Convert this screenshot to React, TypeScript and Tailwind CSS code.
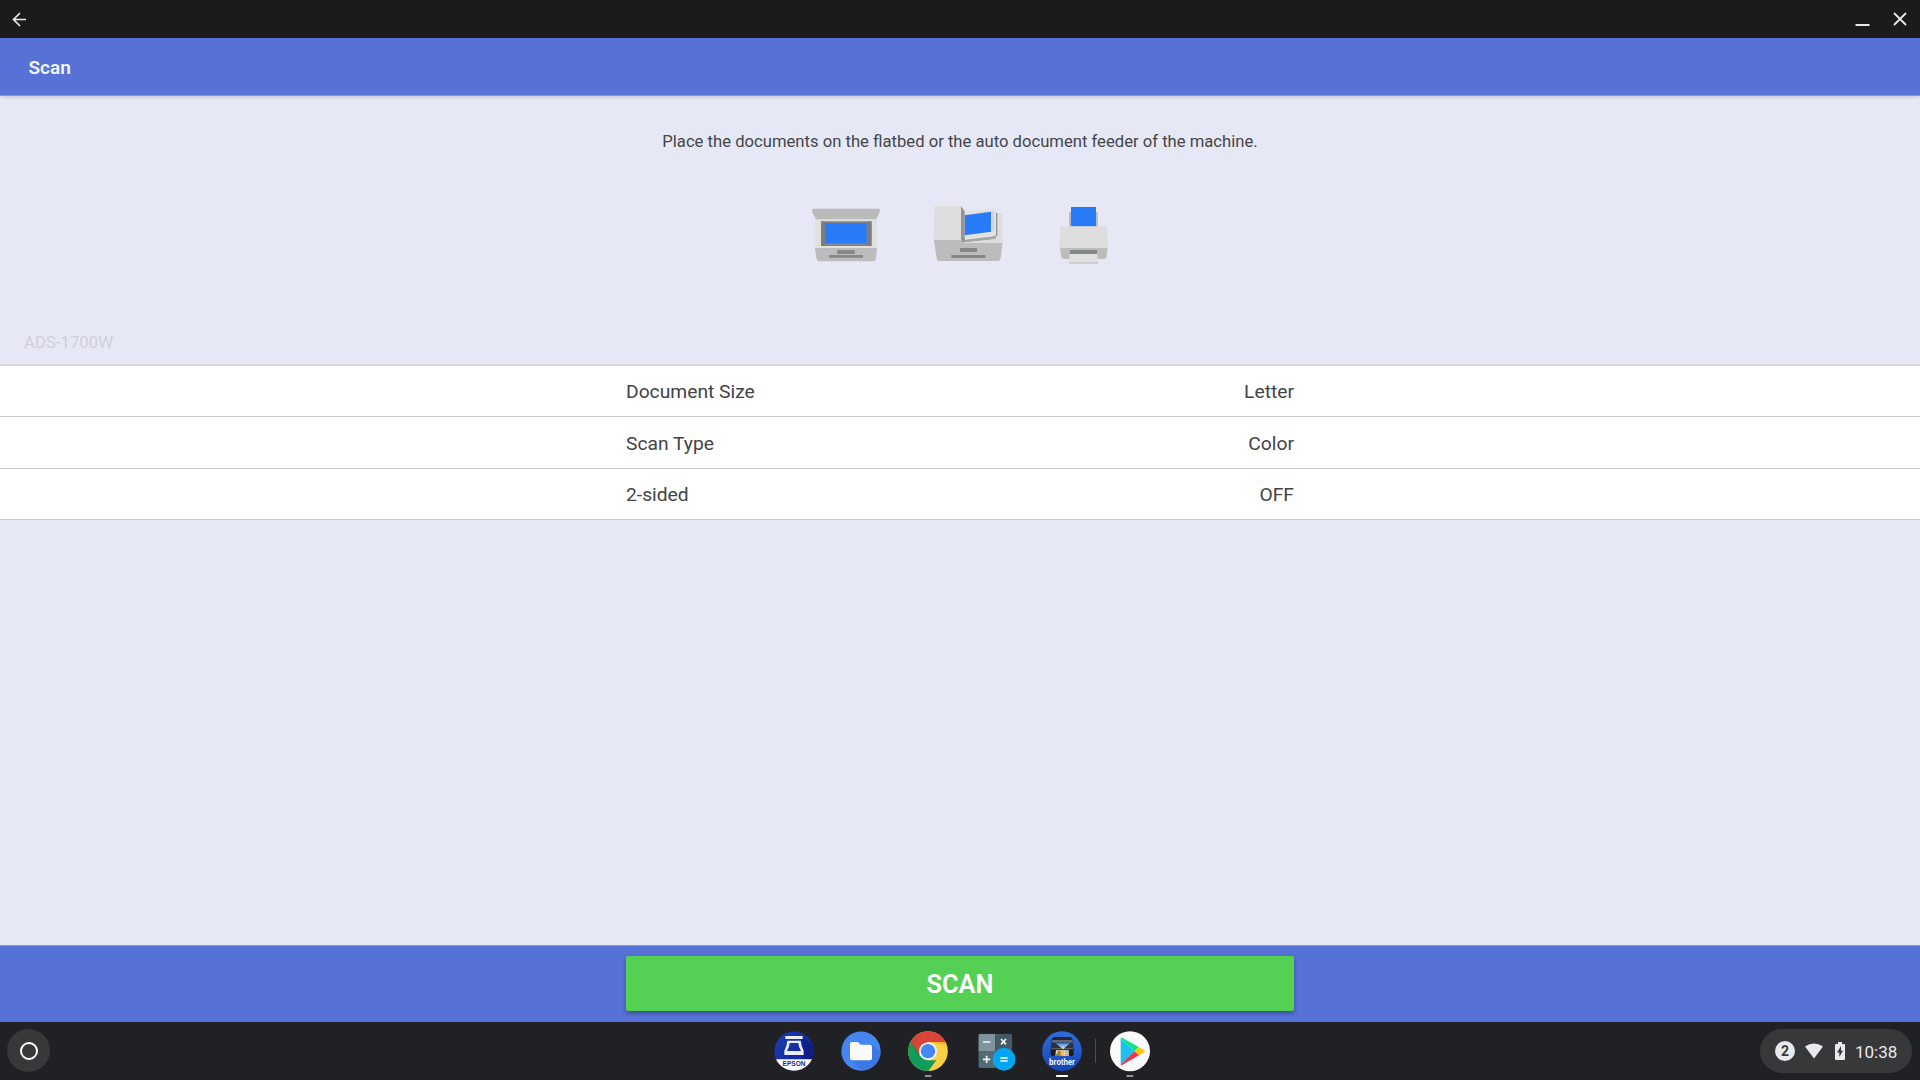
import React from "react";

const FlatbedIcon = () => (
  <svg width="68" height="60" viewBox="36 45 204 180">
    <path d="M46 88H231V176H46Z" fill="#e0e0e0" />
    <path d="M38 56H238Q241 59 239 67L228 88H48L37 67Q35 59 38 56Z" fill="#bababa" />
    <path d="M63 94H215V168H63Z" fill="#858585" />
    <path d="M63 94H76V168H63ZM201 94H215V168H201Z" fill="#787878" opacity=".5" />
    <path d="M76 99H200V160H76Z" fill="#287af6" />
    <path d="M45 174H231L228 203Q226 214 218 214H59Q51 214 49 203Z" fill="#bcbcbc" />
    <path d="M112 180H164V192H112ZM87 195H189V203H87Z" fill="#858888" />
  </svg>
);

const FeederIcon = () => (
  <svg width="70" height="60" viewBox="39 45 210 180">
    <path d="M41 147H249L242 203Q240 213 233 213H59Q51 213 50 203Z" fill="#bcbcbc" />
    <path d="M130 70H243Q248 70 248 76V159H130Z" fill="#dedede" />
    <path d="M128 157V145L232 137V69H228V140Q228 145 222 146Z" fill="#929292" />
    <path d="M130 66L222 55Q228 54 228 60V134Q228 139 222 141L134 151Z" fill="#e2e2e2" />
    <path d="M133 150L222 139Q228 138 228 134V142Q228 146 222 147L133 157Z" fill="#a5a5a5" />
    <path d="M134 76L213 65V125L134 136Z" fill="#287af6" />
    <path d="M215 64H222V121L215 125Z" fill="#d3d3d3" />
    <path d="M123 48L134 64V156L123 150Z" fill="#959595" />
    <path d="M48 48H123V150H41L43 54Q43 48 48 48Z" fill="#dedede" />
    <path d="M120 174H171V186H120ZM94 195H196V204H94Z" fill="#858888" />
  </svg>
);

const PrinterIcon = () => (
  <svg width="49" height="60" viewBox="417 45 147 180">
    <path d="M447 66H534V112H447Z" fill="#bcbcbc" />
    <path d="M453 51H528V110H453Z" fill="#287af6" />
    <path d="M419 170H563L560 200Q558 207 551 207H433Q426 207 424 200Z" fill="#bcbcbc" />
    <path d="M426 109H557Q562 109 562 116L564 174H418L420 116Q420 109 426 109Z" fill="#dedede" />
    <path d="M450 180H531V193H450Z" fill="#858888" />
    <path d="M449 192H532L534 221H447Z" fill="#e0e0e0" />
    <path d="M447 216H534V221H447Z" fill="#cbcbcb" />
  </svg>
);

const EpsonIcon = () => (
  <svg width="40" height="58" viewBox="42 6 120 174">
    <defs>
      <clipPath id="epsonDisc"><circle cx="102" cy="93.500" r="59" /></clipPath>
      <linearGradient id="epsonBlue" x1="0" y1="0" x2="1" y2="0.6">
        <stop offset="0" stopColor="#1a3fae" />
        <stop offset="1" stopColor="#12209a" />
      </linearGradient>
    </defs>
    <g clipPath="url(#epsonDisc)">
      <path d="M42 33H162V154H42Z" fill="url(#epsonBlue)" />
      <path d="M128 48L162 82V118H131Z" fill="#0c166c" opacity=".45" />
      <path d="M42 118H162V155H42Z" fill="#fff" />
    </g>
    <path d="M76 48H128V57H76Z" fill="#e9edf6" />
    <path fillRule="evenodd" d="M82 62H122Q123 76 131 92V105H73V92Q81 76 82 62ZM89 69Q88 82 81 93H123Q116 82 115 69Z" fill="#e9edf6" />
    <text x="102" y="137.500" textAnchor="middle" textLength="69" lengthAdjust="spacingAndGlyphs" fontFamily="Liberation Sans, sans-serif" fontWeight="700" fontSize="23" fill="#1b2c90">EPSON</text>
  </svg>
);

const FilesIcon = () => (
  <svg width="40" height="58" viewBox="243 6 120 174">
    <defs><clipPath id="filesDisc"><circle cx="303" cy="93.500" r="59" /></clipPath></defs>
    <g clipPath="url(#filesDisc)">
      <path d="M243 33H363V154H243Z" fill="#4586f0" />
      <path d="M335 72L365 102V155H310L272 118Z" fill="#3b78df" />
    </g>
    <path d="M275 66H294L302 74H330Q336 74 336 80V115Q336 121 330 121H276Q270 121 270 115V71Q270 66 275 66Z" fill="#fafafa" />
  </svg>
);

const ChromeIcon = () => (
  <svg width="40" height="58" viewBox="444 6 120 174">
    <defs><clipPath id="chromeDisc"><circle cx="504" cy="93.500" r="59.500" /></clipPath></defs>
    <g clipPath="url(#chromeDisc)">
      <path d="M440 30H568V158H440Z" fill="#fcd043" />
      <path d="M440 52L454 64L480 107L504 121H529L503 156H440Z" fill="#119d58" />
      <path d="M451 65L451 25H568V66H504L480 107Z" fill="#da4437" />
      <path d="M504 66H564L553 76Z" fill="#e0a92e" opacity=".6" />
      <path d="M454 64L480 107L474 111Z" fill="#0d8149" opacity=".6" />
    </g>
    <circle cx="504" cy="93.500" r="27" fill="#f1f3f5" />
    <circle cx="504" cy="93.500" r="21.500" fill="#4587f3" />
    <rect x="494" y="165" width="21" height="6" rx="2" fill="#909193" />
  </svg>
);

const CalculatorIcon = () => (
  <svg width="40" height="58" viewBox="51 6 120 174">
    <defs><clipPath id="calcBody"><rect x="55" y="41" width="102" height="103" rx="7" /></clipPath></defs>
    <g clipPath="url(#calcBody)">
      <path d="M55 41H106V93H55Z" fill="#80949e" />
      <path d="M106 41H157V93H106Z" fill="#455a64" />
      <path d="M55 93H106V144H55Z" fill="#536b77" />
      <path d="M106 93H157V144H106Z" fill="#38474f" />
    </g>
    <path d="M69 66H91M69 118H91M80 107V129M123 57L138 73M138 57L123 73" stroke="#f3f5f6" strokeWidth="5" />
    <circle cx="132" cy="118" r="34" fill="#03a6f3" />
    <path d="M121 113.500H143M121 123H143" stroke="#f4fbff" strokeWidth="5" />
  </svg>
);

const BrotherIcon = () => (
  <svg width="40" height="58" viewBox="246 6 120 174">
    <defs>
      <linearGradient id="brotherBlue" x1="0" y1="0" x2="0" y2="1">
        <stop offset="0" stopColor="#326bdc" />
        <stop offset="1" stopColor="#1546b8" />
      </linearGradient>
      <linearGradient id="scanBeam" x1="0" y1="0" x2="0" y2="1">
        <stop offset="0" stopColor="#5487ce" />
        <stop offset="1" stopColor="#e2efff" />
      </linearGradient>
    </defs>
    <circle cx="306" cy="93.500" r="59.500" fill="url(#brotherBlue)" />
    <path d="M280 51H333L343 67H270Z" fill="#25262b" />
    <path d="M277 60H336L341 67H272Z" fill="#65676b" />
    <path d="M273 69H340V82Q340 88 334 88H279Q273 88 273 82Z" fill="#303136" />
    <path d="M272 84H341V102Q341 108 335 108H278Q272 108 272 102Z" fill="#1d1e22" />
    <path d="M274 84H339V88H274Z" fill="#5a5c61" />
    <path d="M287 70H330L309 88Z" fill="url(#scanBeam)" />
    <path d="M288 91H326V108H286Z" fill="#f2ecd8" />
    <circle cx="298" cy="99" r="7" fill="#e3652c" />
    <path d="M287 100L297 105L304 101L311 108H286Z" fill="#47a34c" />
    <path d="M302 92H312V107H302Z" fill="#efc444" />
    <path d="M314 93H324V99H314Z" fill="#90cf8f" />
    <path d="M314 101H324V107H314Z" fill="#e98582" />
    <text x="306" y="136" textAnchor="middle" textLength="78" lengthAdjust="spacingAndGlyphs" fontFamily="Liberation Sans, sans-serif" fontWeight="700" fontSize="25" fill="#fff">brother</text>
    <rect x="288" y="165" width="36" height="6" rx="2" fill="#fff" />
  </svg>
);

const PlayIcon = () => (
  <svg width="40" height="58" viewBox="450 6 120 174">
    <defs>
      <linearGradient id="playBlue" x1="0" y1="0" x2="0" y2="1">
        <stop offset="0" stopColor="#16c9ee" />
        <stop offset="1" stopColor="#27b8f0" />
      </linearGradient>
    </defs>
    <circle cx="510" cy="93.500" r="60" fill="#fafafa" />
    <path d="M482 54V134L523 94Z" fill="url(#playBlue)" />
    <path d="M482 54Q484 51 488 54L537 82L523 94Z" fill="#12e281" />
    <path d="M537 82L553 91Q556 94 553 97L537 106L523 94Z" fill="#ffc50b" />
    <path d="M482 134Q484 137 488 134L537 106L523 94Z" fill="#f43249" />
    <rect x="499" y="165" width="21" height="6" rx="2" fill="#909193" />
  </svg>
);

const TitleBar = () => (
  <div className="flex h-[38px] shrink-0 items-center justify-between bg-[#1b1b1b] pl-[12px] pr-[13px]">
    <svg width="15" height="15" viewBox="0 0 15 15" fill="none" stroke="#e8e8e8" strokeWidth="1.7">
      <path d="M14 7.500H1.600M8 1L1.500 7.500L8 14" />
    </svg>
    <div className="flex items-center gap-[23px]">
      <svg width="15" height="15" viewBox="0 0 15 15"><path d="M0.500 13H14.500" stroke="#e8e8e8" strokeWidth="2" /></svg>
      <svg width="14" height="14" viewBox="0 0 14 14"><path d="M1 1L13 13M13 1L1 13" stroke="#e8e8e8" strokeWidth="1.800" /></svg>
    </div>
  </div>
);

const settings = [
  { label: "Document Size", value: "Letter", height: "h-[51px]" },
  { label: "Scan Type", value: "Color", height: "h-[52px]" },
  { label: "2-sided", value: "OFF", height: "h-[51px]" },
];

const StatusTray = () => (
  <div className="mr-[8px] flex h-[44px] w-[152px] items-center rounded-full bg-[#37383a] pl-[15px]">
    <div className="flex size-[20px] items-center justify-center rounded-full bg-[#e8eaed] text-[14px] font-bold leading-none text-[#37383a]">2</div>
    <svg className="ml-[10px]" width="18" height="16" viewBox="0 0 18 16"><path d="M0 3.500Q9 -2.500 18 3.500L9 15.500Z" fill="#e8eaed" /></svg>
    <svg className="ml-[12px]" width="10" height="18" viewBox="0 0 10 18">
      <path d="M3 0H7V2H9Q10 2 10 3V17Q10 18 9 18H1Q0 18 0 17V3Q0 2 1 2H3Z" fill="#e8eaed" />
      <path d="M6 4L2 10.500H4.300V15L8 8.800H6Z" fill="#37383a" />
    </svg>
    <span className="ml-[10px] mt-[3px] text-[17px] leading-none text-[#e8eaed]">10:38</span>
  </div>
);

export default function App() {
  return (
    <div className="flex h-[1080px] w-[1920px] flex-col overflow-hidden bg-[#e6e9f5] font-[Roboto,sans-serif]">
      <TitleBar />
      <header className="z-10 flex h-[58px] shrink-0 items-center border-b border-[#8397e0] bg-[#5672d7] pl-[28.5px] shadow-[0_1px_4px_rgba(0,0,0,0.16)]">
        <h1 className="pt-[2px] text-[19px] font-semibold leading-none text-[#f4f6fd]">Scan</h1>
      </header>
      <main className="flex grow flex-col">
        <p className="mt-[34px] text-center text-[16.65px] leading-[24px] text-[#444549]">
          Place the documents on the flatbed or the auto document feeder of the machine.
        </p>
        <div className="mt-[51px] flex pl-[812px]">
          <FlatbedIcon />
          <div className="ml-[53px]"><FeederIcon /></div>
          <div className="ml-[56px]"><PrinterIcon /></div>
        </div>
        <div className="mt-[65px] pl-[24px] text-[16.75px] leading-[24px] text-[#cfd0da]">ADS-1700W</div>
        <div className="mt-[10px] border-t-2 border-[#d8d8da] bg-white">
          {settings.map((s) => (
            <div key={s.label} className={`flex items-center justify-between border-b border-[#cbcbcc] px-[626px] pt-[3px] text-[19.25px] text-[#434343] ${s.height}`}>
              <span>{s.label}</span>
              <span>{s.value}</span>
            </div>
          ))}
        </div>
      </main>
      <footer className="flex h-[77px] shrink-0 justify-center border-t border-[#8397e0] bg-[#5672d7] pt-[10px]">
        <button className="h-[55px] w-[668px] rounded-[2px] bg-[#54d054] pt-[3px] text-[25.3px] font-semibold leading-none text-white shadow-[0_2px_4px_rgba(0,0,0,0.35)]">SCAN</button>
      </footer>
      <nav className="flex h-[58px] shrink-0 items-center justify-between bg-[#202124]">
        <div className="mb-[1px] ml-[7px] flex size-[43px] items-center justify-center rounded-full bg-[#37383a]">
          <div className="size-[18px] rounded-full border-2 border-white" />
        </div>
        <div className="ml-[113px] flex items-center">
          <EpsonIcon />
          <div className="ml-[27px]"><FilesIcon /></div>
          <div className="ml-[27px]"><ChromeIcon /></div>
          <div className="ml-[29px]"><CalculatorIcon /></div>
          <div className="ml-[25px]"><BrotherIcon /></div>
          <div className="ml-[13px] h-[24px] w-px bg-[#4c4d50]" />
          <div className="ml-[14px]"><PlayIcon /></div>
        </div>
        <StatusTray />
      </nav>
    </div>
  );
}
